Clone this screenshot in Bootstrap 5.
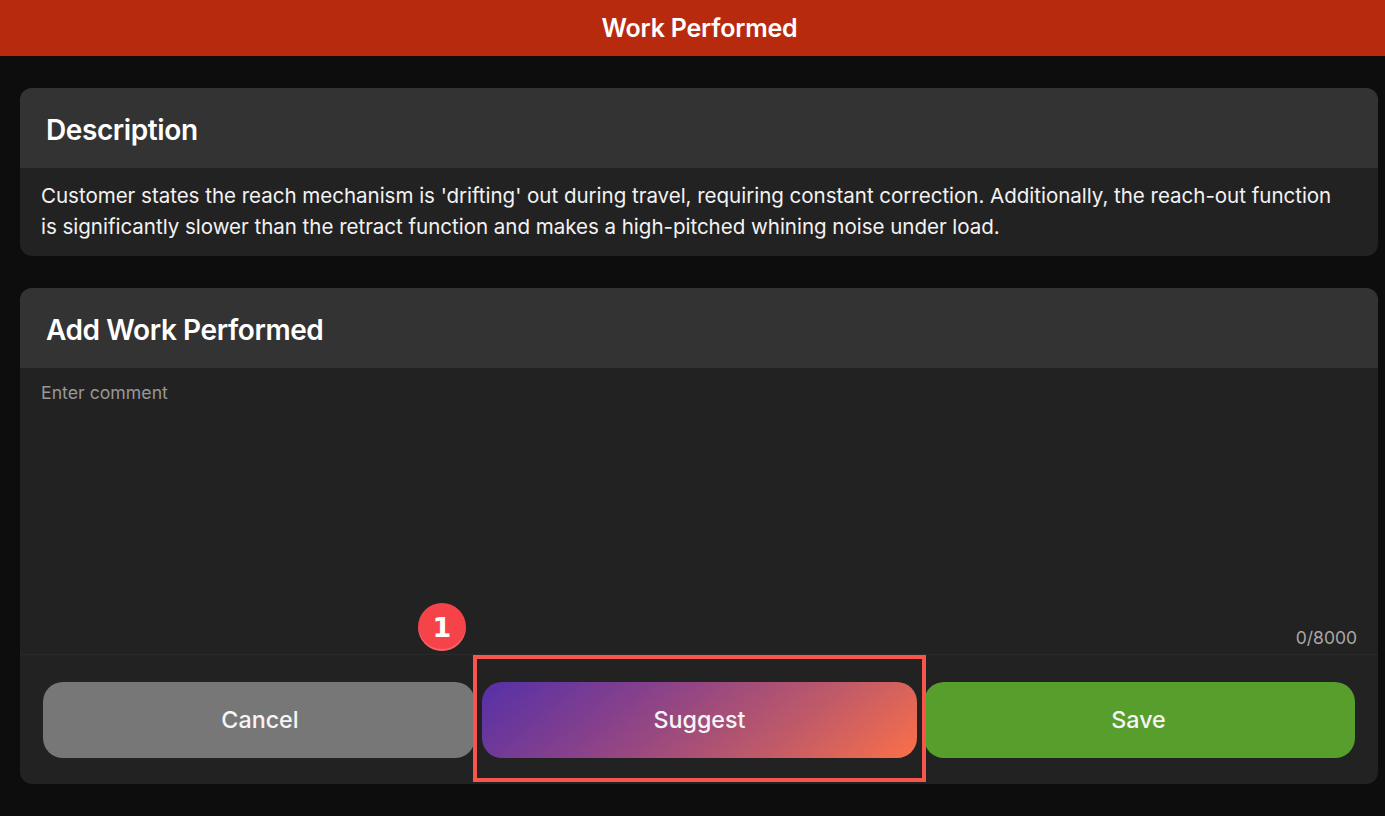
<!DOCTYPE html>
<html lang="en">

<head>
    <meta charset="UTF-8" />
    <meta name="viewport" content="width=device-width, initial-scale=1.0" />
    <title>Work Performed</title>
    <link href="https://cdn.jsdelivr.net/npm/bootstrap@5.3.3/dist/css/bootstrap.min.css" rel="stylesheet">
    <style>
        body {
            background-color: #0d0d0d;
            color: #f2f2f2;
            font-family: Inter, "Liberation Sans", sans-serif;
            height: 816px;
            overflow: hidden;
        }

        .top-bar {
            height: 57px;
            padding-left: 14px;
            padding-top: 2px;
            background-color: #b82a0e;
            border-bottom: 1px solid #1a0a06;
            font-size: 25px;
            font-weight: 600;
            letter-spacing: -0.2px;
            color: #fff;
        }

        .page-body {
            padding: 31px 7px 0 20px;
        }

        .panel {
            background-color: #222222;
            border-radius: 12px;
            overflow: hidden;
        }

        .panel-head {
            height: 80px;
            padding-left: 26px;
            padding-top: 4px;
            background-color: #333333;
            font-size: 28px;
            font-weight: 600;
            letter-spacing: -0.4px;
            color: #fff;
        }

        .desc-text {
            height: 88px;
            margin: 0;
            padding: 12px 40px 0 21px;
            font-size: 20.55px;
            line-height: 31px;
            letter-spacing: -0.03px;
        }

        .comment-area {
            height: 287px;
            border-bottom: 1px solid #2a2a2a;
        }

        .comment-input,
        .comment-input:focus {
            height: 259px;
            padding: 12px 21px 0;
            background-color: transparent;
            border: 0;
            border-radius: 0;
            box-shadow: none;
            resize: none;
            color: #f2f2f2;
            font-size: 17.7px;
        }

        .comment-input::placeholder {
            color: #979797;
        }

        .char-count {
            padding-right: 21px;
            color: #a8a8a8;
            font-size: 17.5px;
            line-height: 22px;
        }

        .action-row {
            gap: 7px;
            padding: 27px 23px 25px;
        }

        .action-btn,
        .action-btn:hover {
            height: 76px;
            border: 0;
            border-radius: 20px;
            color: #f5f5f5;
            font-size: 23.3px;
            font-weight: 500;
        }

        .btn-cancel,
        .btn-cancel:hover {
            flex: 0 0 432px;
            padding-left: 14px;
            background-color: #777777;
        }

        .btn-suggest,
        .btn-suggest:hover {
            flex: 0 0 435px;
            background: linear-gradient(140deg, #5530a8 0%, #8a4289 35%, #c05a68 70%, #fb7048 100%);
        }

        .btn-save,
        .btn-save:hover {
            flex: 0 0 431px;
            padding-right: 14px;
            background-color: #579e2d;
        }

        .add-panel {
            margin-top: 32px;
            height: 496px;
        }

        .panel-wrap {
            position: relative;
        }

        .highlight-box {
            position: absolute;
            left: 453px;
            top: 367px;
            width: 453px;
            height: 127px;
            border: 4px solid #f9564b;
            pointer-events: none;
        }

        .step-badge {
            position: absolute;
            left: 398px;
            top: 315px;
            width: 48px;
            height: 48px;
            border-radius: 50%;
            background-color: #f6434a;
            box-shadow: inset 0 -2px 0 rgba(255, 255, 255, 0.18);
            color: #fff;
            font-family: "DejaVu Sans", sans-serif;
            font-size: 27px;
            font-weight: 700;
            line-height: 1;
        }
    </style>
</head>

<body>
    <div class="top-bar d-flex align-items-center justify-content-center">Work Performed</div>

    <div class="page-body">
        <div class="panel">
            <div class="panel-head d-flex align-items-center">Description</div>
            <p class="desc-text">Customer states the reach mechanism is 'drifting' out during travel, requiring constant correction. Additionally, the reach-out function is significantly slower than the retract function and makes a high-pitched whining noise under load.</p>
        </div>

        <div class="panel-wrap">
            <div class="panel add-panel">
                <div class="panel-head d-flex align-items-center">Add Work Performed</div>
                <div class="comment-area">
                    <textarea class="form-control comment-input" placeholder="Enter comment" aria-label="Enter comment"></textarea>
                    <div class="char-count text-end">0/8000</div>
                </div>
                <div class="action-row d-flex">
                    <button type="button" class="btn action-btn btn-cancel">Cancel</button>
                    <button type="button" class="btn action-btn btn-suggest">Suggest</button>
                    <button type="button" class="btn action-btn btn-save">Save</button>
                </div>
            </div>
            <div class="highlight-box"></div>
            <div class="step-badge d-flex align-items-center justify-content-center">1</div>
        </div>
    </div>

    <script src="https://cdn.jsdelivr.net/npm/bootstrap@5.3.3/dist/js/bootstrap.bundle.min.js"></script>
</body>

</html>
